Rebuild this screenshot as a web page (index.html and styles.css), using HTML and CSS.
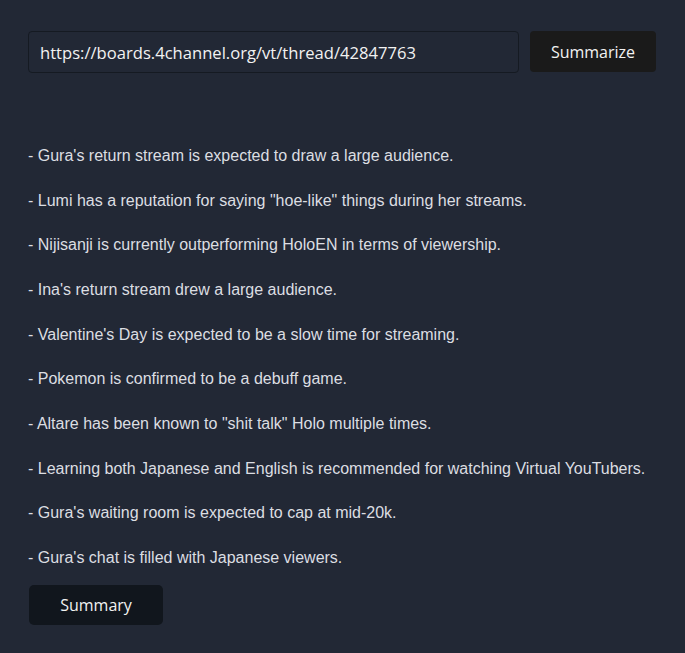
FILE: index.html
```html
<!DOCTYPE html>
<html lang="en">
<head>
    <meta charset="UTF-8">
    <meta name="viewport" content="width=device-width, initial-scale=1.0">
    <title>Thread Summarizer</title>
    <link rel="stylesheet" href="styles.css">
</head>
<body>
    <div class="container">
        <form class="url-form">
            <input type="text" class="url-input" value="https://boards.4channel.org/vt/thread/42847763">
            <button type="submit" class="btn-summarize">Summarize</button>
        </form>

        <div class="summary">
            <p>- Gura's return stream is expected to draw a large audience.</p>
            <p>- Lumi has a reputation for saying "hoe-like" things during her streams.</p>
            <p>- Nijisanji is currently outperforming HoloEN in terms of viewership.</p>
            <p>- Ina's return stream drew a large audience.</p>
            <p>- Valentine's Day is expected to be a slow time for streaming.</p>
            <p>- Pokemon is confirmed to be a debuff game.</p>
            <p>- Altare has been known to "shit talk" Holo multiple times.</p>
            <p>- Learning both Japanese and English is recommended for watching Virtual YouTubers.</p>
            <p>- Gura's waiting room is expected to cap at mid-20k.</p>
            <p>- Gura's chat is filled with Japanese viewers.</p>
        </div>

        <button type="button" class="btn-summary">Summary</button>
    </div>
</body>
</html>
```

FILE: styles.css
```css
body {
    margin: 0;
    background-color: #222835;
    font-family: "Liberation Sans", Arial, sans-serif;
    color: #dcdee2;
}

.container {
    padding: 31px 29px 28px 28px;
}

.url-form {
    display: flex;
    gap: 11px;
    margin: 0 0 69px 0;
}

.url-input {
    flex: 1;
    height: 42px;
    box-sizing: border-box;
    padding: 0 11px;
    background-color: #222835;
    border: 1px solid #151a22;
    border-radius: 4px;
    color: #f2f2f2;
    font-family: "Open Sans", sans-serif;
    font-weight: 500;
    font-size: 16.6px;
    outline: none;
}

.btn-summarize {
    width: 126px;
    height: 41px;
    border: none;
    border-radius: 4px;
    background-color: #1a1a1a;
    color: #f2f2f2;
    font-family: "Open Sans", sans-serif;
    font-weight: 500;
    font-size: 16px;
    cursor: pointer;
}

.summary p {
    margin: 16px 0;
    font-size: 16px;
    line-height: 28.67px;
}

.summary p:last-child {
    margin-bottom: 12px;
}

.btn-summary {
    margin-left: 1px;
    width: 134px;
    height: 40px;
    border: none;
    border-radius: 5px;
    background-color: #11161d;
    color: #f2f2f2;
    font-family: "Open Sans", sans-serif;
    font-weight: 500;
    font-size: 16px;
    cursor: pointer;
}
```
